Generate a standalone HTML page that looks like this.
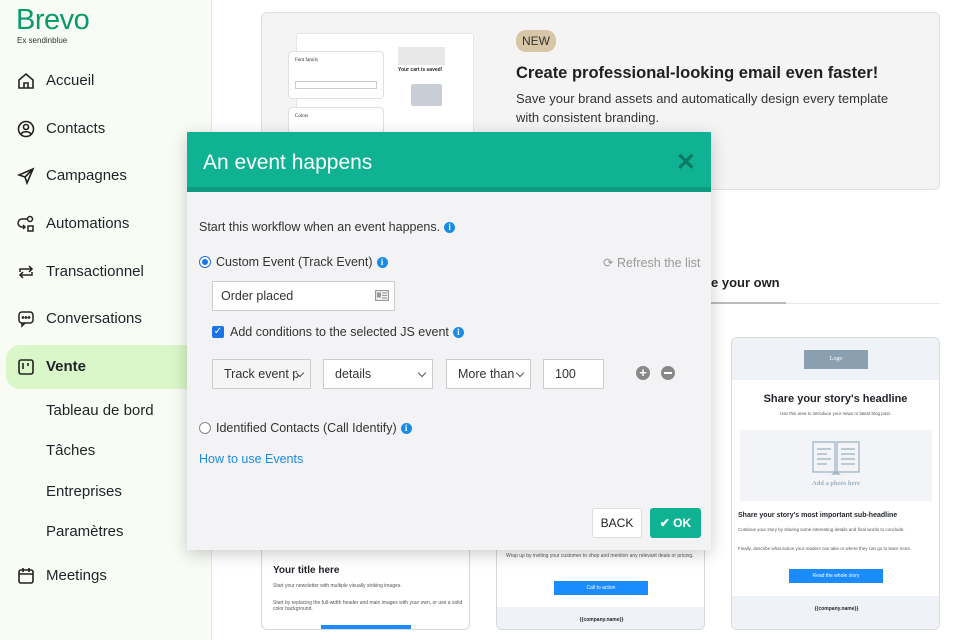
<!DOCTYPE html>
<html><head><meta charset="utf-8"><style>
*{box-sizing:border-box;margin:0;padding:0}
body{width:960px;height:640px;overflow:hidden;background:#fff;font-family:"Liberation Sans",sans-serif;position:relative;color:#1f2328}
.sb{position:absolute;left:0;top:0;width:212px;height:640px;background:#f8fcf5;border-right:1px solid #e3ece6}
.logo{position:absolute;left:16px;top:4px;font-size:29px;color:#0b996e;letter-spacing:-0.5px}
.ex{position:absolute;left:17px;top:36px;font-size:8px;color:#333}
.nav{position:absolute;left:46px;font-size:15px;color:#1f2328}
.ic{position:absolute;left:17px;width:18px;height:18px}
.vente{position:absolute;left:6px;top:345px;width:206px;height:44px;background:#d9f7c8;border-radius:14px 0 0 14px}
.banner{position:absolute;left:261px;top:12px;width:679px;height:178px;background:#f4f4f4;border:1px solid #e0e0e0;border-radius:6px}
.card{position:absolute;background:#fff;border:1px solid #d8d8d8;border-radius:6px;overflow:hidden}
.modal{position:absolute;left:187px;top:132px;width:524px;height:418px;background:#f3f3f5;box-shadow:0 4px 16px rgba(0,0,0,.2)}
.mh{height:60px;background:#10b294;border-bottom:5px solid #0d9a7e;color:#fff;font-size:21px;padding:19px 16px}
.t{position:absolute;font-size:12.5px;color:#333}
.info{display:inline-block;width:11px;height:11px;border-radius:50%;background:#1a8ce6;color:#fff;font-size:9px;font-weight:bold;text-align:center;line-height:11px;vertical-align:1px;margin-left:4px;font-family:"Liberation Serif",serif}
.sel{position:absolute;top:227px;height:30px;background:#fff;border:1px solid #ccc;font-size:12.5px;padding:7px 11px;color:#333}
.sel.g{background:#f5f5f5}
.chev{position:absolute;right:7px;top:10px;width:6px;height:6px;border-right:1.3px solid #555;border-bottom:1.3px solid #555;transform:rotate(45deg)}
</style></head><body>
<div class="sb">
<div class="logo">Brevo</div><div class="ex">Ex sendinblue</div>
<svg class="ic" style="top:72px" viewBox="0 0 18 18" fill="none" stroke="#222" stroke-width="1.6"><path d="M2 8L9 2l7 6v8H2z"/><path d="M7 16v-5h4v5"/></svg>
<div class="nav" style="top:72px">Accueil</div>
<svg class="ic" style="top:120px" viewBox="0 0 18 18" fill="none" stroke="#222" stroke-width="1.6"><circle cx="9" cy="9" r="7.5"/><circle cx="9" cy="7" r="2.5"/><path d="M4 14c2-3 8-3 10 0"/></svg>
<div class="nav" style="top:120px">Contacts</div>
<svg class="ic" style="top:167px" viewBox="0 0 18 18" fill="none" stroke="#222" stroke-width="1.6"><path d="M16 2L2 8l6 2 2 6z"/><path d="M8 10l8-8"/></svg>
<div class="nav" style="top:167px">Campagnes</div>
<svg class="ic" style="top:215px" viewBox="0 0 18 18" fill="none" stroke="#222" stroke-width="1.5"><circle cx="13" cy="4" r="2.5"/><rect x="11" y="11" width="5" height="5"/><path d="M10 4H5a3 3 0 0 0 0 8h3M6 10l2 2-2 2"/></svg>
<div class="nav" style="top:215px">Automations</div>
<svg class="ic" style="top:263px" viewBox="0 0 18 18" fill="none" stroke="#222" stroke-width="1.5"><path d="M3 9V6h12M12 3l3 3-3 3M15 9v3H3M6 15l-3-3 3-3"/></svg>
<div class="nav" style="top:263px">Transactionnel</div>
<svg class="ic" style="top:310px" viewBox="0 0 18 18" fill="none" stroke="#222" stroke-width="1.5"><rect x="2" y="2" width="14" height="11" rx="3"/><path d="M5 13v3l3-3"/><circle cx="6" cy="7.5" r=".6"/><circle cx="9" cy="7.5" r=".6"/><circle cx="12" cy="7.5" r=".6"/></svg>
<div class="nav" style="top:310px">Conversations</div>
<div class="vente"></div>
<svg class="ic" style="top:358px" viewBox="0 0 18 18" fill="none" stroke="#222" stroke-width="1.6"><rect x="2" y="2" width="14" height="14" rx="2"/><path d="M6 5v6M11 5v3"/></svg>
<div class="nav" style="top:358px;font-weight:bold">Vente</div>
<div class="nav" style="top:402px">Tableau de bord</div>
<div class="nav" style="top:442px">Tâches</div>
<div class="nav" style="top:483px">Entreprises</div>
<div class="nav" style="top:523px">Paramètres</div>
<svg class="ic" style="top:567px" viewBox="0 0 18 18" fill="none" stroke="#222" stroke-width="1.6"><rect x="2" y="3" width="14" height="13" rx="2"/><path d="M2 7h14M6 1v4M12 1v4"/></svg>
<div class="nav" style="top:567px">Meetings</div>
</div>

<div class="banner">
<div style="position:absolute;left:34px;top:20px;width:178px;height:110px;background:#fff;border:1px solid #e6e6e6;border-radius:3px"></div>
<div style="position:absolute;left:26px;top:38px;width:96px;height:48px;background:#fff;border:1px solid #e0e0e0;border-radius:4px;font-size:5px;padding:6px;font-family:'Liberation Serif',serif">Font family<div style="margin-top:18px;border:1px solid #ccc;height:8px"></div></div>
<div style="position:absolute;left:26px;top:94px;width:96px;height:40px;background:#fff;border:1px solid #e0e0e0;border-radius:4px;font-size:5px;padding:6px;font-family:'Liberation Serif',serif">Colors</div>
<div style="position:absolute;left:136px;top:34px;width:47px;height:18px;background:#e8e8e8"></div>
<div style="position:absolute;left:136px;top:54px;font-size:5px;font-weight:bold">Your cart is saved!</div>
<div style="position:absolute;left:149px;top:71px;width:31px;height:22px;background:#c8cdd6;border-radius:2px"></div>
<div style="position:absolute;left:254px;top:17px;background:#d8c7a6;border-radius:10px;padding:4px 6px;font-size:12px;color:#333">NEW</div>
<div style="position:absolute;left:254px;top:51px;font-size:16.5px;font-weight:bold;color:#1f1f1f">Create professional-looking email even faster!</div>
<div style="position:absolute;left:254px;top:76px;font-size:13px;line-height:19px;color:#333;width:395px">Save your brand assets and automatically design every template with consistent branding.</div>
</div>

<div style="position:absolute;left:711px;top:275px;font-size:13px;font-weight:bold;color:#222">e your own</div>
<div style="position:absolute;left:711px;top:303px;width:229px;height:1px;background:#e6e6e6"></div>
<div style="position:absolute;left:711px;top:302px;width:75px;height:2px;background:#bbb"></div>

<div class="card" style="left:261px;top:480px;width:209px;height:150px">
<div style="position:absolute;left:11px;top:84px;font-size:10px;font-weight:bold">Your title here</div>
<div style="position:absolute;left:11px;top:102px;font-size:5px;color:#555">Start your newsletter with multiple visually striking images.</div>
<div style="position:absolute;left:11px;top:119px;font-size:5px;color:#555;width:190px">Start by replacing the full-width header and main images with your own, or use a solid color background.</div>
<div style="position:absolute;left:59px;top:144px;width:90px;height:6px;background:#1a8cff"></div>
</div>
<div class="card" style="left:496px;top:480px;width:209px;height:150px">
<div style="position:absolute;left:9px;top:71px;font-size:5px;color:#555;width:190px;line-height:9px">Wrap up by inviting your customer to shop and mention any relevant deals or pricing.</div>
<div style="position:absolute;left:57px;top:100px;width:94px;height:14px;background:#1a8cff;color:#fff;font-size:5px;text-align:center;line-height:14px">Call to action</div>
<div style="position:absolute;left:0;top:126px;width:209px;height:24px;background:#eff2f7;font-size:5px;text-align:center;padding-top:10px;font-weight:bold">{{company.name}}</div>
</div>
<div class="card" style="left:731px;top:337px;width:209px;height:293px">
<div style="height:42px;background:#eff2f7;position:relative"><div style="position:absolute;left:72px;top:12px;width:64px;height:19px;background:#8aa0b1;color:#fff;font-size:6px;text-align:center;line-height:19px;font-family:'Liberation Serif',serif">Logo</div></div>
<div style="text-align:center;font-size:11px;font-weight:bold;margin-top:13px">Share your story's headline</div>
<div style="text-align:center;font-size:4.5px;color:#555;margin-top:6px">Use this area to introduce your news or latest blog post.</div>
<div style="position:absolute;left:8px;top:92px;width:192px;height:71px;background:#f2f4f8">
<svg style="position:absolute;left:72px;top:10px" width="48" height="36" viewBox="0 0 48 36" fill="none" stroke="#9bb0c2" stroke-width="1.2"><path d="M1 2h22v30H1zM25 2h22v30H25zM24 32l-3 2h6z"/><path d="M5 9h14M5 14h10M5 19h14M5 24h10M29 9h14M29 14h14M29 19h14M29 24h14"/></svg>
<div style="position:absolute;top:50px;width:100%;text-align:center;font-size:6.5px;color:#9bb0c2;font-family:'Liberation Serif',serif;font-weight:bold">Add a photo here</div></div>
<div style="position:absolute;left:6px;top:174px;font-size:7px;font-weight:bold">Share your story's most important sub-headline</div>
<div style="position:absolute;left:6px;top:189px;font-size:4.5px;color:#555">Continue your story by sharing some interesting details and final words to conclude.</div>
<div style="position:absolute;left:6px;top:207px;font-size:4.5px;color:#555;width:195px;line-height:8px">Finally, describe what action your readers can take or where they can go to learn more.</div>
<div style="position:absolute;left:57px;top:231px;width:94px;height:14px;background:#1a8cff;color:#fff;font-size:5px;text-align:center;line-height:14px">Read the whole story</div>
<div style="position:absolute;left:0;top:258px;width:209px;height:35px;background:#eff2f7;font-size:5px;text-align:center;padding-top:10px;font-weight:bold">{{company.name}}</div>
</div>

<div class="modal">
<div class="mh">An event happens<span style="position:absolute;right:15px;top:16px;color:#0a7a63;font-size:24px;font-weight:bold">✕</span></div>
<div class="t" style="left:12px;top:88px">Start this workflow when an event happens.<span class="info">i</span></div>
<div style="position:absolute;left:12px;top:124px;width:12px;height:12px;border-radius:50%;border:1px solid #1a73e8;background:#fff"><div style="margin:2px;width:6px;height:6px;border-radius:50%;background:#1a73e8"></div></div>
<div class="t" style="left:29px;top:123px">Custom Event (Track Event)<span class="info">i</span></div>
<div class="t" style="left:416px;top:123px;color:#999">⟳ Refresh the list</div>
<div style="position:absolute;left:25px;top:149px;width:183px;height:30px;background:#fff;border:1px solid #ccc;font-size:12.5px;padding:7px 8px;color:#333">Order placed
<svg style="position:absolute;right:5px;top:8px" width="14" height="11" viewBox="0 0 14 11" fill="none" stroke="#999" stroke-width="1.2"><rect x=".6" y=".6" width="12.8" height="9.8"/><rect x="2.5" y="3" width="3" height="4" fill="#999"/><path d="M7 3h5M7 5.5h5M7 8h5"/></svg></div>
<div style="position:absolute;left:25px;top:194px;width:12px;height:12px;border-radius:2px;background:#1a73e8;color:#fff;font-size:10px;line-height:12px;text-align:center">✓</div>
<div class="t" style="left:43px;top:193px">Add conditions to the selected JS event<span class="info">i</span></div>
<div class="sel g" style="left:25px;width:99px;overflow:hidden;white-space:nowrap">Track event p<span class="chev" style="background:#f5f5f5"></span></div>
<div class="sel" style="left:136px;width:110px">details<span class="chev"></span></div>
<div class="sel" style="left:259px;width:85px">More than<span class="chev"></span></div>
<div class="sel" style="left:356px;width:61px">100</div>
<div style="position:absolute;left:449px;top:234px;width:14px;height:14px;border-radius:50%;background:#888;color:#fff;font-size:13px;line-height:14px;text-align:center;font-weight:bold">+</div>
<div style="position:absolute;left:474px;top:234px;width:14px;height:14px;border-radius:50%;background:#888"><div style="margin:6px 3px;height:2px;background:#fff"></div></div>
<div style="position:absolute;left:12px;top:290px;width:12px;height:12px;border-radius:50%;border:1px solid #888;background:#fff"></div>
<div class="t" style="left:29px;top:289px">Identified Contacts (Call Identify)<span class="info">i</span></div>
<div class="t" style="left:12px;top:320px;color:#1a8ce6">How to use Events</div>
<div style="position:absolute;left:405px;top:376px;width:50px;height:30px;background:#fff;border:1px solid #ddd;border-radius:3px;font-size:12px;text-align:center;line-height:29px;color:#222">BACK</div>
<div style="position:absolute;left:463px;top:376px;width:51px;height:30px;background:#10b294;border-radius:3px;font-size:12px;text-align:center;line-height:30px;color:#fff;font-weight:bold">✔ OK</div>
</div>
</body></html>
